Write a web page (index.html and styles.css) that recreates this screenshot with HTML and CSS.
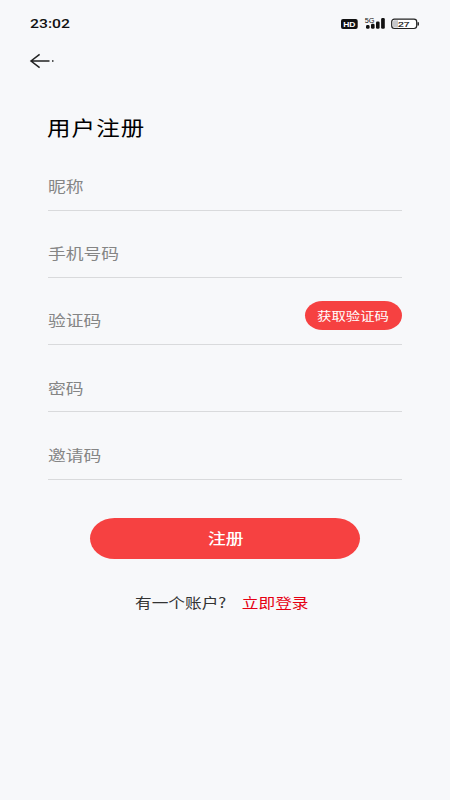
FILE: index.html
```html
<!DOCTYPE html>
<html lang="zh-CN">
<head>
<meta charset="utf-8">
<title>用户注册</title>
<link rel="stylesheet" href="styles.css">
</head>
<body>
<div class="screen">
  <header class="status">
    <span class="time"><span class="wide">23:02</span></span>
    <svg class="status-icons" width="80" height="14" viewBox="0 0 80 14">
      <rect x="1" y="2" width="16.7" height="10" rx="2" fill="#111"/>
      <text x="3.2" y="10" class="hd" textLength="12.3" lengthAdjust="spacingAndGlyphs">HD</text>
      <text x="24.7" y="5.9" class="net" textLength="9.8" lengthAdjust="spacingAndGlyphs">5G</text>
      <g fill="#111">
        <rect x="26" y="8" width="3.6" height="3.8" rx="1.4"/>
        <rect x="31" y="6.7" width="3.6" height="5.1" rx="1.4"/>
        <rect x="36" y="4.4" width="3.6" height="7.4" rx="1.3"/>
        <rect x="41.1" y="1.1" width="3.7" height="10.7" rx="1.3"/>
      </g>
      <rect x="51.7" y="2.1" width="25" height="9.4" rx="2.7" fill="#fff" stroke="#222" stroke-width="1.2"/>
      <path d="M58 3.2H54.5Q53 3.2 53 4.7V9Q53 10.5 54.5 10.5H58Z" fill="#c6c7ca"/>
      <text x="58" y="9.7" class="charge" textLength="11.5" lengthAdjust="spacingAndGlyphs">27</text>
      <path d="M78.2 5.3V8.5" stroke="#222" stroke-width="1.5"/>
    </svg>
  </header>
  <nav class="nav">
    <svg width="26" height="16" viewBox="0 0 26 16" fill="none" stroke="#222" stroke-width="1.5">
      <path d="M10.6 1.3L2 8L10.6 14.7M2 8H20.5M23 8H24.5"/>
    </svg>
  </nav>
  <main class="form">
    <h1 class="title"><span class="wide">用户注册</span></h1>
    <div class="field"><span class="wide">昵称</span></div>
    <div class="field"><span class="wide">手机号码</span></div>
    <div class="field"><span class="wide">验证码</span><button class="code"><span class="wide">获取验证码</span></button></div>
    <div class="field"><span class="wide">密码</span></div>
    <div class="field"><span class="wide">邀请码</span></div>
    <button class="submit"><span class="wide">注册</span></button>
    <p class="login"><span class="wide">有一个账户?<a class="link">立即登录</a></span></p>
  </main>
</div>
</body>
</html>
```
FILE: styles.css
```css
* { box-sizing: border-box; }
body {
  margin: 0;
  background: #f7f8fa;
  font-family: "Noto Sans CJK SC", sans-serif;
}
.screen { width: 450px; height: 800px; overflow: hidden; }
.wide { display: inline-block; transform: scaleX(1.2); transform-origin: left center; white-space: nowrap; }
.status {
  display: flex;
  justify-content: space-between;
  align-items: center;
  height: 48px;
  padding: 0 30px;
}
.time { font: 500 12.7px/16px Roboto, sans-serif; color: #111; }
.time .wide { transform: scaleX(1.24); }
.hd { font: 700 8px "Liberation Sans", sans-serif; fill: #fff; }
.net { font: 400 6.5px "Liberation Sans", sans-serif; fill: #111; }
.charge { font: 400 8px "Liberation Sans", sans-serif; fill: #111; stroke: #111; stroke-width: 0.2px; }
.nav { height: 26px; padding: 5px 0 0 29px; }
.nav svg { display: block; }
.form { padding: 0 48px; }
.title {
  margin: 0 0 0 -1px;
  padding-top: 38px;
  height: 69.3px;
  font-size: 20.4px;
  line-height: 30px;
  font-weight: 400;
  color: #000;
}
.title .wide { transform: scaleX(1.15); letter-spacing: 1px; }
.field {
  display: flex;
  justify-content: space-between;
  align-items: flex-start;
  height: 67.25px;
  padding-top: 31.7px;
  border-bottom: 1px solid #d9dadc;
  font-size: 14.8px;
  line-height: 22px;
  color: #858585;
}
button {
  display: flex;
  align-items: center;
  justify-content: center;
  border: 0;
  padding: 0;
  color: #fff;
  background: #f64141;
  font-family: inherit;
}
button .wide { transform-origin: center; }
.code {
  width: 97px;
  height: 29px;
  margin-top: -8.3px;
  border-radius: 17.5px / 14.5px;
  font-size: 12px;
  line-height: 18px;
}
.submit {
  width: 270px;
  height: 41px;
  margin: 38px auto 0;
  border-radius: 24.5px / 20.5px;
  font-size: 14.8px;
  font-weight: 500;
  line-height: 22px;
}
.submit .wide { margin-left: 1px; }
.login {
  margin: 32px 0 0 87px;
  font-size: 13.9px;
  line-height: 22px;
  color: #333;
}
.link { margin-left: 13px; color: #e60012; }
```
